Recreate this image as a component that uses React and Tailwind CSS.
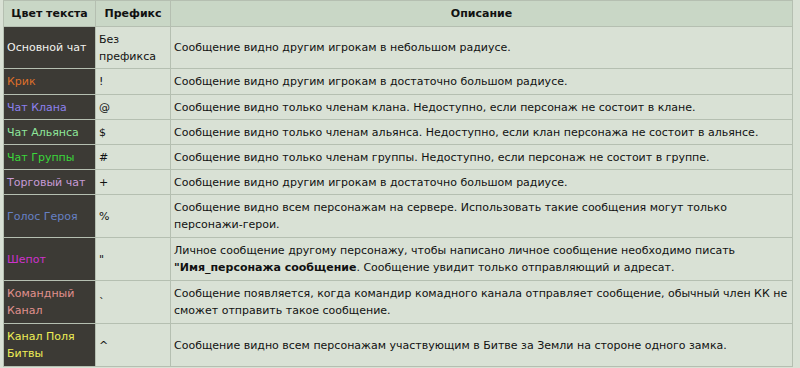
import React from 'react';

const rows = [
  { name: 'Основной чат', color: 'text-[#f2f2ee]', prefix: <>Без<br />префикса</>, desc: 'Сообщение видно другим игрокам в небольшом радиусе.' },
  { name: 'Крик', color: 'text-[#dd6f2a]', prefix: '!', desc: 'Сообщение видно другим игрокам в достаточно большом радиусе.' },
  { name: 'Чат Клана', color: 'text-[#8c80ee]', prefix: '@', desc: 'Сообщение видно только членам клана. Недоступно, если персонаж не состоит в клане.' },
  { name: 'Чат Альянса', color: 'text-[#8ee69a]', prefix: '$', desc: 'Сообщение видно только членам альянса. Недоступно, если клан персонажа не состоит в альянсе.' },
  { name: 'Чат Группы', color: 'text-[#3ad83a]', prefix: '#', desc: 'Сообщение видно только членам группы. Недоступно, если персонаж не состоит в группе.' },
  { name: 'Торговый чат', color: 'text-[#c79ad6]', prefix: '+', desc: 'Сообщение видно другим игрокам в достаточно большом радиусе.' },
  { name: 'Голос Героя', color: 'text-[#6680c4]', prefix: '%', desc: 'Сообщение видно всем персонажам на сервере. Использовать такие сообщения могут только персонажи-герои.' },
  {
    name: 'Шепот', color: 'text-[#cc33cc]', prefix: '"',
    desc: <>Личное сообщение другому персонажу, чтобы написано личное сообщение необходимо писать <b>"Имя_персонажа сообщение</b>. Сообщение увидит только отправляющий и адресат.</>,
  },
  { name: 'Командный Канал', color: 'text-[#e0918e]', prefix: '`', desc: 'Сообщение появляется, когда командир комадного канала отправляет сообщение, обычный член КК не сможет отправить такое сообщение.' },
  { name: 'Канал Поля Битвы', color: 'text-[#eeee55]', prefix: '^', desc: 'Сообщение видно всем персонажам участвующим в Битве за Земли на стороне одного замка.' },
];

const heights = ['h-[42px]', 'h-[26px]', 'h-[25px]', 'h-[25px]', 'h-[25px]', 'h-[25px]', 'h-[43px]', 'h-[43px]', 'h-[43px]', 'h-[43px]'];

export default function App() {
  return (
    <div className="w-[800px] h-[368px] bg-[#d9e1d5] overflow-hidden pl-[3px] text-[11px] leading-[17px] text-[#111] [font-family:'DejaVu_Sans',Verdana,sans-serif]">
      <table className="w-[790px] border-collapse border border-[#b5bfb1] table-fixed">
        <colgroup>
          <col className="w-[92px]" />
          <col className="w-[75px]" />
          <col />
        </colgroup>
        <thead>
          <tr className="h-[26px] bg-[#c9d7c6]">
            <th className="border border-[#b5bfb1] font-bold px-1 text-center">Цвет текста</th>
            <th className="border border-[#b5bfb1] font-bold px-1 text-center">Префикс</th>
            <th className="border border-[#b5bfb1] font-bold px-1 text-center">Описание</th>
          </tr>
        </thead>
        <tbody>
          {rows.map((r, i) => (
            <tr key={i} className={heights[i]}>
              <td className={`border border-[#b5bfb1] bg-[#3c3a35] px-[3px] ${r.color}`}>{r.name}</td>
              <td className="border border-[#b5bfb1] px-[3px]">{r.prefix}</td>
              <td className="border border-[#b5bfb1] px-[3px]">{r.desc}</td>
            </tr>
          ))}
        </tbody>
      </table>
    </div>
  );
}
